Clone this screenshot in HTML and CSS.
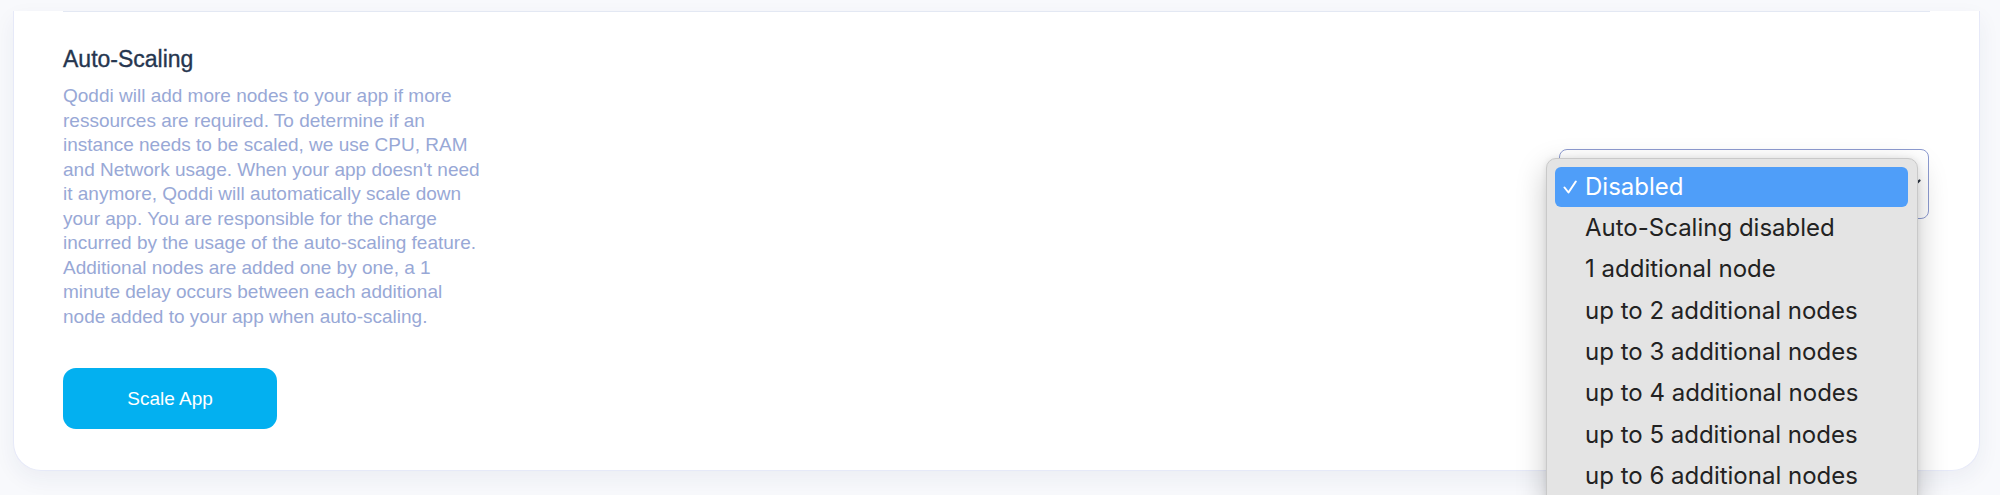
FILE: index.html
```html
<!DOCTYPE html>
<html lang="en">
<head>
<meta charset="utf-8">
<title>Auto-Scaling</title>
<link rel="stylesheet" href="styles.css">
</head>
<body>
<div class="page">
  <section class="card">
    <hr class="divider">
    <div class="setting">
      <div class="setting-text">
        <h3 class="setting-title">Auto-Scaling</h3>
        <p class="setting-desc">Qoddi will add more nodes to your app if more ressources are required. To determine if an instance needs to be scaled, we use CPU, RAM and Network usage. When your app doesn't need it anymore, Qoddi will automatically scale down your app. You are responsible for the charge incurred by the usage of the auto-scaling feature. Additional nodes are added one by one, a 1 minute delay occurs between each additional node added to your app when auto-scaling.</p>
      </div>
      <div class="select-wrap">
        <div class="select">
          <svg class="select-chevron" width="16" height="10" viewBox="0 0 16 10"><path d="M1.5 1.5 L8 8 L14.5 1.5" fill="none" stroke="#2b3340" stroke-width="2.2" stroke-linecap="round" stroke-linejoin="round"/></svg>
        </div>
        <ul class="menu">
          <li class="menu-item is-selected">
            <svg class="check" width="14" height="14" viewBox="0 0 14 14"><path d="M1.5 7.5 L5.5 12.5 L12.8 1.5" fill="none" stroke="#ffffff" stroke-width="2" stroke-linecap="round" stroke-linejoin="round"/></svg>
            <span>Disabled</span>
          </li>
          <li class="menu-item"><span>Auto-Scaling disabled</span></li>
          <li class="menu-item"><span>1 additional node</span></li>
          <li class="menu-item"><span>up to 2 additional nodes</span></li>
          <li class="menu-item"><span>up to 3 additional nodes</span></li>
          <li class="menu-item"><span>up to 4 additional nodes</span></li>
          <li class="menu-item"><span>up to 5 additional nodes</span></li>
          <li class="menu-item"><span>up to 6 additional nodes</span></li>
        </ul>
      </div>
    </div>
    <button class="btn" type="button">Scale App</button>
  </section>
</div>
</body>
</html>
```
FILE: styles.css
```css
html, body {
  margin: 0;
  padding: 0;
  height: 495px;
  overflow: hidden;
  background: #f8f9fc;
}

body {
  font-family: "Liberation Sans", Arial, sans-serif;
}

.page {
  padding: 0 20px 0 13px;
}

.card {
  background: #ffffff;
  border: 1px solid #e6e9f8;
  border-top: none;
  border-radius: 0 0 28px 28px;
  padding: 0 49px 41px 49px;
  box-shadow: 0 8px 22px rgba(40, 50, 110, 0.06);
}

.divider {
  margin: 11px 0 0 0;
  border: none;
  height: 1px;
  background: #e3e8f3;
}

.setting {
  display: flex;
  justify-content: space-between;
  align-items: center;
  margin-top: 33px;
}

.setting-title {
  margin: 0;
  font-size: 23px;
  line-height: 28px;
  font-weight: 400;
  -webkit-text-stroke: 0.35px #26364f;
  color: #26364f;
}

.setting-desc {
  margin: 11px 0 0 0;
  width: 426px;
  font-size: 19px;
  line-height: 24.5px;
  color: #98a8d6;
}

.select-wrap {
  position: relative;
  margin-right: 1px;
  margin-bottom: 6px;
}

.select {
  width: 370px;
  height: 70px;
  box-sizing: border-box;
  border: 1.5px solid #8d9bd0;
  border-radius: 8px;
  background: #ffffff;
  display: flex;
  align-items: center;
  justify-content: flex-end;
  padding-right: 7px;
}

.select-chevron {
  display: block;
}

.menu {
  position: absolute;
  left: -13px;
  top: 9px;
  width: 372px;
  box-sizing: border-box;
  margin: 0;
  padding: 8px 9px 8px 8px;
  list-style: none;
  background: #e4e4e4;
  border: 1px solid #c9c9c9;
  border-radius: 10px;
  box-shadow: 0 10px 30px rgba(0, 0, 0, 0.22), 0 0 6px rgba(0, 0, 0, 0.08);
  font-family: Inter, "Noto Sans", sans-serif;
  font-size: 24px;
  color: #222222;
  z-index: 10;
}

.menu-item {
  height: 41.3px;
  display: flex;
  align-items: center;
  padding-left: 30px;
  border-radius: 6px;
  position: relative;
}

.menu-item span {
  margin-top: -2px;
}

.menu-item.is-selected {
  height: 40px;
  margin-bottom: 1px;
  background: #4f9ef9;
  color: #ffffff;
}

.check {
  position: absolute;
  left: 8px;
  top: 13px;
}

.btn {
  display: block;
  margin-top: 39px;
  width: 214px;
  height: 61px;
  border: none;
  border-radius: 13px;
  background: #03b0f0;
  color: #ffffff;
  font-family: "Liberation Sans", Arial, sans-serif;
  font-size: 19px;
  cursor: pointer;
}
```
